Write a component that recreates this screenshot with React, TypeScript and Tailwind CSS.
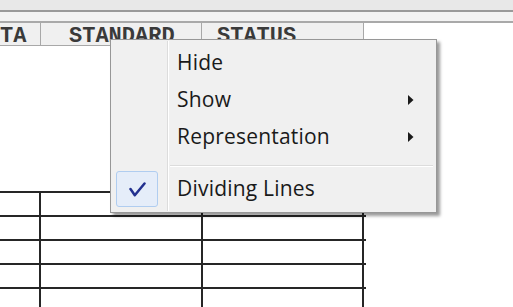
import React from "react";

const menuItems = [
	{ label: "Hide", sub: false },
	{ label: "Show", sub: true },
	{ label: "Representation", sub: true },
];

function Arrow() {
	return (
		<svg width="6" height="10" viewBox="0 0 6 10" className="mr-[22px] shrink-0">
			<path d="M0 0 L5.5 5 L0 10 Z" fill="#1a1a1a" />
		</svg>
	);
}

function GridRow() {
	return (
		<div className="flex h-[24px] border-t-2 border-[#262626]">
			<div className="w-[41px] border-r-2 border-[#262626]" />
			<div className="w-[162px] border-r-2 border-[#262626]" />
			<div className="w-[161px] border-r-2 border-[#262626]" />
		</div>
	);
}

export default function App() {
	return (
		<div className="relative h-[307px] w-[513px] overflow-hidden bg-white">
			{/* toolbar strip */}
			<div className="h-[10px] bg-[#e8e8e8]" />
			<div className="h-[2px] bg-[#9a9a9a]" />
			<div className="h-[9px] bg-[#f3f3f3]" />
			<div className="h-[2px] bg-[#a9a9a9]" />

			{/* column headers */}
			<div className="flex font-['Liberation_Mono',monospace] text-[22px] font-bold text-[#3a3a3a]">
				<div className="h-[23px] w-[41px] border-r border-b border-[#a8a8a8] bg-[#f0f0f0] pt-[4px] leading-[20px]">
					TA
				</div>
				<div className="h-[23px] w-[161px] border-r border-b border-[#a8a8a8] bg-[#f0f0f0] pt-[4px] pl-[28px] leading-[20px]">
					STANDARD
				</div>
				<div className="h-[23px] w-[162px] border-r border-b border-[#a8a8a8] bg-[#f0f0f0] pt-[4px] pl-[15px] leading-[20px]">
					STATUS
				</div>
			</div>

			{/* table body */}
			<div className="mt-[145px] w-[366px]">
				<GridRow />
				<GridRow />
				<GridRow />
				<GridRow />
				<GridRow />
			</div>

			{/* context menu */}
			<div className="absolute left-[110px] top-[39px] flex h-[174px] w-[327px] border border-[#979797] bg-[#f0f0f0] font-['Open_Sans',sans-serif] text-[21px] tracking-[0.2px] text-[#1a1a1a] shadow-[3px_3px_3px_rgba(0,0,0,0.4)]">
				<div className="relative flex-1 pt-[4px] pb-[4px]">
					<div className="absolute left-[56px] top-[1px] bottom-[1px] w-[2px] border-l border-[#dcdcdc] bg-white" />
					{menuItems.map((item) => (
						<div key={item.label} className="flex h-[37px] items-center justify-between pl-[66px]">
							<span>{item.label}</span>
							{item.sub && <Arrow />}
						</div>
					))}
					<div className="ml-[59px] mr-[3px] mt-[10px] mb-[4px] h-[2px] border-t border-[#dcdcdc] bg-white" />
					<div className="flex h-[36px] items-center">
						<div className="ml-[5px] flex h-[36px] w-[42px] shrink-0 items-center justify-center rounded-[3px] border border-[#b0cdf0] bg-[#e5edf9]">
							<svg width="17" height="15" viewBox="0 0 17 15">
								<path d="M1.5 7 L5.8 13.2 L15.5 1.5" fill="none" stroke="#22308f" strokeWidth="2.5" strokeLinejoin="round" strokeLinecap="round" />
							</svg>
						</div>
						<span className="ml-[19px]">Dividing Lines</span>
					</div>
				</div>
			</div>
		</div>
	);
}
